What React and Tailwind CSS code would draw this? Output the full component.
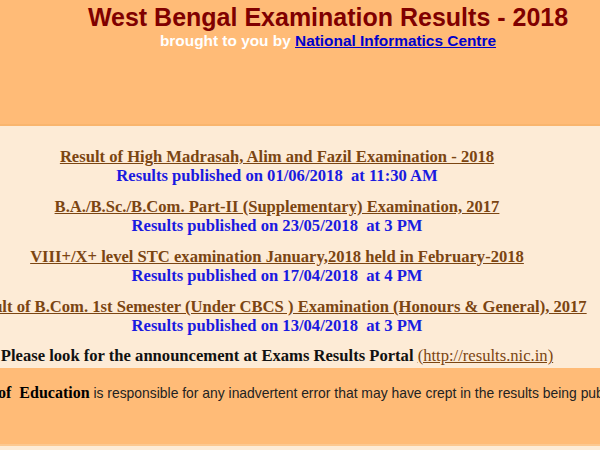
import React from 'react';

const results = [
    { title: 'Result of High Madrasah, Alim and Fazil Examination - 2018', when: 'Results published on 01/06/2018  at 11:30 AM' },
    { title: 'B.A./B.Sc./B.Com. Part-II (Supplementary) Examination, 2017', when: 'Results published on 23/05/2018  at 3 PM' },
    { title: 'VIII+/X+ level STC examination January,2018 held in February-2018', when: 'Results published on 17/04/2018  at 4 PM' },
    { title: 'Result of B.Com. 1st Semester (Under CBCS ) Examination (Honours & General), 2017', when: 'Results published on 13/04/2018  at 3 PM' },
];

const App = () => {
    return (
        <div className="w-[600px] h-[450px] overflow-hidden bg-[#fdebd6]">
            {/* Header band */}
            <div className="h-[126px] bg-[#ffbb77] border-b-2 border-[#f9b56e] font-['Liberation_Sans',Arial,sans-serif] font-bold">
                <div className="w-[656px] text-center pt-[2px]">
                    <h1 className="text-[25px] leading-[30px] text-[#800000]">West Bengal Examination Results - 2018</h1>
                    <p className="text-[15.4px] leading-[18px] text-white">
                        brought to you by{' '}
                        <a href="#" className="text-[#0000cc] underline">National Informatics Centre</a>
                    </p>
                </div>
            </div>

            {/* Result list */}
            <div className="h-[242px] pt-[21px] font-['Liberation_Serif','Times_New_Roman',serif] font-bold">
                <div className="w-[660px] -ml-[53px] text-center">
                    {results.map((r) => (
                        <div key={r.when} className="mb-[12px] text-[16.6px] leading-[19px]">
                            <a href="#" className="block text-[#7b4512] underline whitespace-nowrap">{r.title}</a>
                            <div className="text-[#1a1ae0] whitespace-pre">{r.when}</div>
                        </div>
                    ))}
                    <p className="text-[16.6px] leading-[19px] text-[#111] whitespace-nowrap -mt-[1px]">
                        Please look for the announcement at Exams Results Portal{' '}
                        <a href="#" className="font-normal text-[#7b4512] underline">(http://results.nic.in)</a>
                    </p>
                </div>
            </div>

            {/* Disclaimer band */}
            <div className="h-[78px] bg-[#ffbb77] border-b-2 border-[#fcc890] pt-[13px] whitespace-nowrap">
                <p className="-ml-[2px] text-[13.9px] text-[#222] font-['Liberation_Sans',Arial,sans-serif]">
                    <b className="text-[16px] text-black font-['Liberation_Serif','Times_New_Roman',serif]">of&nbsp; Education</b>{' '}
                    is responsible for any inadvertent error that may have crept in the results being published
                </p>
            </div>
        </div>
    );
};

export default App;
